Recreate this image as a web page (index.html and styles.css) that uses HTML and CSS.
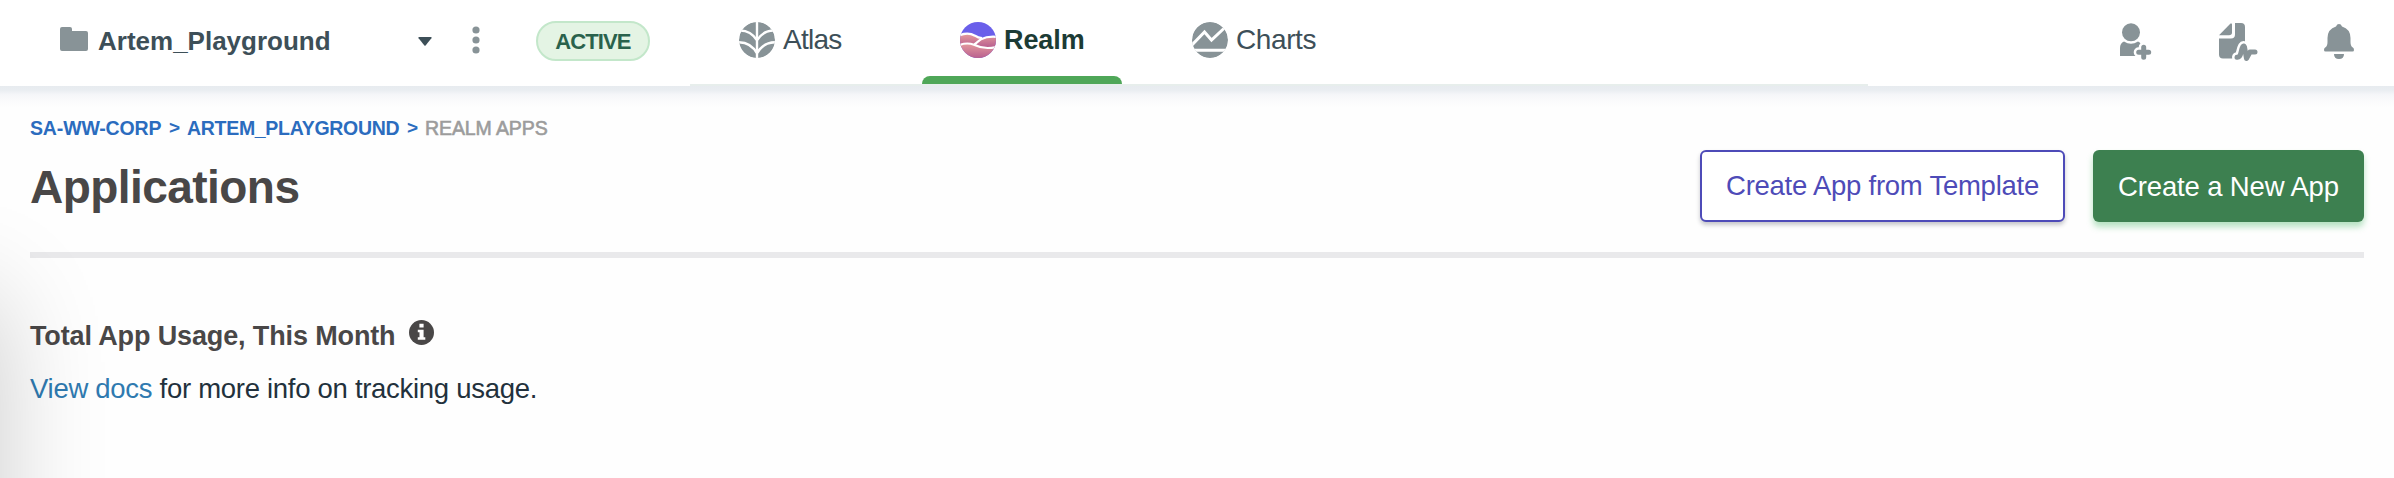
FILE: index.html
```html
<!DOCTYPE html>
<html lang="en">
<head>
<meta charset="utf-8">
<title>Applications</title>
<link rel="stylesheet" href="styles.css">
</head>
<body>
<header class="topbar">
  <div class="project">
    <svg class="folder" viewBox="0 0 28 24"><path d="M0 2Q0 0 2 0H10Q12 0 12 2V4H26Q28 4 28 6V22Q28 24 26 24H2Q0 24 0 22Z"/></svg>
    <span class="project-name">Artem_Playground</span>
    <svg class="caret" viewBox="0 0 14 9"><path d="M.8 0H13.2Q14 .4 13.4 1.2L7.6 8.4Q7 9 6.4 8.4L.6 1.2Q0 .4.8 0Z"/></svg>
    <svg class="dots" viewBox="0 0 8 28"><circle cx="4" cy="4" r="3.6"/><circle cx="4" cy="14" r="3.6"/><circle cx="4" cy="24" r="3.6"/></svg>
    <span class="pill">ACTIVE</span>
  </div>
  <nav class="tabs">
    <a class="tab atlas">
      <svg class="product" viewBox="0 0 36 36"><defs><clipPath id="disc"><circle cx="18" cy="18" r="18"/></clipPath></defs><g clip-path="url(#disc)"><circle class="grey" cx="18" cy="18" r="18"/><path class="cut" d="M18 0V36M1 8.5Q12 8.5 18 18.5Q24 8.5 35 8.5M0 20.3Q12 20.5 18 31.5Q24 20.5 36 20.3"/></g></svg>
      <span>Atlas</span>
    </a>
    <a class="tab realm">
      <svg class="product" viewBox="0 0 36 36"><defs><linearGradient id="mid" x1="0" y1="0" x2="0" y2="1"><stop offset="0" stop-color="#e59b9d"/><stop offset="1" stop-color="#b9608f"/></linearGradient></defs><g clip-path="url(#disc)"><rect class="sky" width="36" height="36"/><path fill="url(#mid)" d="M0 13.5Q8 10 15 14Q18 16 21 17Q28 14 36 15V25H0Z"/><path fill="url(#mid)" d="M0 22Q8 20 15 23Q26 28 36 24.5V36H0Z"/><path class="wave" d="M-1 13.4Q8 9.5 15 13.7Q18 16 22 16.2M36 14.8Q27 14.2 21 17.2Q18 19.6 14.5 22.4M-1 23.2Q7 20 14 22.8Q24 27.8 36 25"/></g></svg>
      <span>Realm</span>
    </a>
    <a class="tab charts">
      <svg class="product" viewBox="0 0 36 36"><g clip-path="url(#disc)"><circle class="grey" cx="18" cy="18" r="18"/><path class="cut line" d="M-1 24L12.5 10L19.5 18L34 4.5M0 28.2H36"/></g></svg>
      <span>Charts</span>
    </a>
  </nav>
  <div class="actions">
    <svg class="user" viewBox="0 0 32 38"><circle cx="11" cy="9.3" r="9"/><path d="M0 33V25Q0 20 4 18.4Q11 23 18 18.4Q21 19.5 22 24V33Z"/><path class="halo" d="M23.7 24.3V34.3M18.7 29.3H28.7"/><path class="plus" d="M23.7 24.3V34.3M18.7 29.3H28.7"/></svg>
    <svg class="doc" viewBox="0 0 39 38"><path d="M0 12.3L11.5.6Q13 0 13 1V9.5Q13 12.3 10 12.3Z"/><path d="M16 0H22Q26 0 26 4V31Q26 35.5 22 35.5H4Q0 35.5 0 31.5V15.5H12Q16 15.5 16 11.5Z"/><path class="halo" d="M18 34.2Q21 34.5 22 29.5Q24 20.5 25.5 24L27.5 35.5L31 29H36"/><path class="pulse" d="M18 34.2Q21 34.5 22 29.5Q24 20.5 25.5 24L27.5 35.5L31 29H36"/></svg>
    <svg class="bell" viewBox="0 0 30 35"><path d="M15 0Q17 0 18 2.4Q26.5 5 26.5 14V18Q26.5 22 28.5 23.2Q30 24 30 26Q30 27.5 28.5 27.5H1.5Q0 27.5 0 26Q0 24 1.5 23.2Q3.5 22 3.5 18V14Q3.5 5 12 2.4Q13 0 15 0ZM10 30H20Q20 35 15 35T10 30Z"/></svg>
  </div>
</header>
<main class="page">
  <div class="crumbs"><a class="c1">SA-WW-CORP</a><span class="sep">&gt;</span><a class="c2">ARTEM_PLAYGROUND</a><span class="sep">&gt;</span><span class="here">REALM APPS</span></div>
  <div class="heading">
    <h1>Applications</h1>
    <button class="btn outline">Create App from Template</button>
    <button class="btn solid">Create a New App</button>
  </div>
  <section class="usage">
    <h2><span>Total App Usage, This Month</span><svg class="info" viewBox="0 0 25 25"><circle cx="12.5" cy="12.5" r="12.5"/><path d="M10.4 3.8H14.6V7.4H10.4ZM8.8 9.8H14.6V17.2H16.3V19.8H8.8V17.2H10.5V12.3H8.8Z"/></svg></h2>
    <p><a>View docs</a> for more info on tracking usage.</p>
  </section>
</main>
<div class="side-shadow"></div>
</body>
</html>
```
FILE: styles.css
```css
* { box-sizing: border-box; }
body { margin: 0; width: 2394px; height: 478px; overflow: hidden; position: relative; background: #fefefe; font-family: "Liberation Sans", Arial, sans-serif; }
svg { display: block; flex: none; overflow: visible; }
.topbar { position: relative; display: flex; height: 86px; background: #fff; color: #3d4f58; white-space: nowrap; }
.topbar::after { content: ""; position: absolute; left: 0; right: 0; top: 86px; height: 22px; background: linear-gradient(#e7ebef, #e9edf1 18%, #f5f6f9 40%, #fbfbfc 70%, #fefefe); }
.project { display: flex; width: 690px; padding-left: 60px; align-items: flex-start; }
.folder { width: 28px; height: 24px; margin-top: 27px; fill: #889397; }
.project-name { width: 234px; margin: 21px 0 0 10px; font-size: 26px; font-weight: 700; line-height: 40px; }
.caret { width: 14px; height: 9px; margin: 37px 0 0 86px; fill: #3d4f58; }
.dots { width: 8px; height: 28px; margin: 26px 0 0 40px; fill: #889397; }
.pill { width: 114px; height: 40px; margin: 21px 0 0 56px; border: 2px solid #c3e7ca; border-radius: 20px; background: #e4f4e4; color: #2a624c; font-size: 22px; font-weight: 700; line-height: 37px; letter-spacing: -.9px; text-align: center; }
.tabs { display: flex; width: 1178px; height: 86px; border-bottom: 2px solid #e7eeec; }
.tab { display: flex; height: 84px; padding-top: 22px; font-size: 28px; line-height: 35px; }
.product { width: 36px; height: 36px; }
.atlas { width: 232px; padding-left: 49px; letter-spacing: -.75px; }
.atlas span { margin-left: 8px; }
.realm { width: 200px; padding-left: 38px; position: relative; color: #1c3b35; font-size: 27px; font-weight: 700; line-height: 37px; letter-spacing: -.1px; }
.realm span { margin-left: 8px; }
.realm::after { content: ""; position: absolute; left: 0; right: 0; bottom: 0; height: 8px; border-radius: 8px 8px 0 0; background: #4fa758; }
.charts { padding-left: 70px; letter-spacing: -.4px; }
.charts span { margin-left: 8px; }
.grey { fill: #889397; }
.cut { fill: none; stroke: #fff; stroke-width: 2.4; }
.line { stroke-width: 3; }
.sky { fill: #6a5fea; }
.wave { fill: none; stroke: #fff; stroke-width: 2.2; }
.actions { display: flex; padding-left: 252px; fill: #889397; }
.user { width: 32px; height: 38px; margin-top: 23px; }
.doc { width: 39px; height: 38px; margin: 23px 0 0 67px; }
.bell { width: 30px; height: 35px; margin: 23.5px 0 0 66px; }
.halo { fill: none; stroke: #fff; stroke-width: 10; stroke-linecap: round; stroke-linejoin: round; }
.plus, .pulse { fill: none; stroke: #889397; stroke-width: 5; stroke-linecap: round; stroke-linejoin: round; }
.page { padding: 30px 30px 0; }
.crumbs { display: flex; height: 24px; font-size: 19.5px; font-weight: 700; line-height: 24px; color: #2b6cbe; white-space: nowrap; }
.c1 { width: 131px; letter-spacing: -.15px; }
.c2 { width: 212px; letter-spacing: -.3px; }
.sep { width: 10px; margin: 0 8px; }
.crumbs .sep { font-size: 19px; }
.here { color: #9c9c9c; font-weight: 400; letter-spacing: -.1px; -webkit-text-stroke: .6px #9c9c9c; }
.heading { display: flex; align-items: flex-start; height: 118px; padding-top: 10px; border-bottom: 6px solid #e9e9eb; white-space: nowrap; }
h1 { flex: 1; margin: 0; color: #494747; font-size: 46px; line-height: 74px; letter-spacing: -.55px; }
.btn { height: 72px; padding: 0; border-radius: 6px; font: 27.5px/68px "Liberation Sans", Arial, sans-serif; text-align: center; letter-spacing: -.25px; }
.outline { width: 365px; border: 2px solid #4e4bb8; background: #fff; color: #4e4bb8; box-shadow: 0 3px 4px rgba(30, 35, 50, .25); }
.solid { width: 271px; margin-left: 28px; border: 0; background: #3d8050; color: #fff; line-height: 73px; letter-spacing: -.15px; box-shadow: 0 5px 6px rgba(75, 185, 105, .4); }
.usage { padding-top: 58px; }
h2 { display: flex; height: 40px; margin: 0; color: #494747; font-size: 27px; line-height: 40px; white-space: nowrap; }
h2 span { width: 379px; letter-spacing: -.13px; }
.info { width: 25px; height: 25px; margin-top: 3.5px; fill: #494747; }
.info path { fill: #fff; }
.usage p { margin: 13px 0 0; color: #22313c; font-size: 27.5px; line-height: 40px; letter-spacing: -.29px; }
.usage a { color: #2f7ab0; }
.side-shadow { position: absolute; left: -400px; top: 297px; width: 400px; height: 600px; box-shadow: 0 0 100px rgba(0, 0, 0, .2); pointer-events: none; }
```
